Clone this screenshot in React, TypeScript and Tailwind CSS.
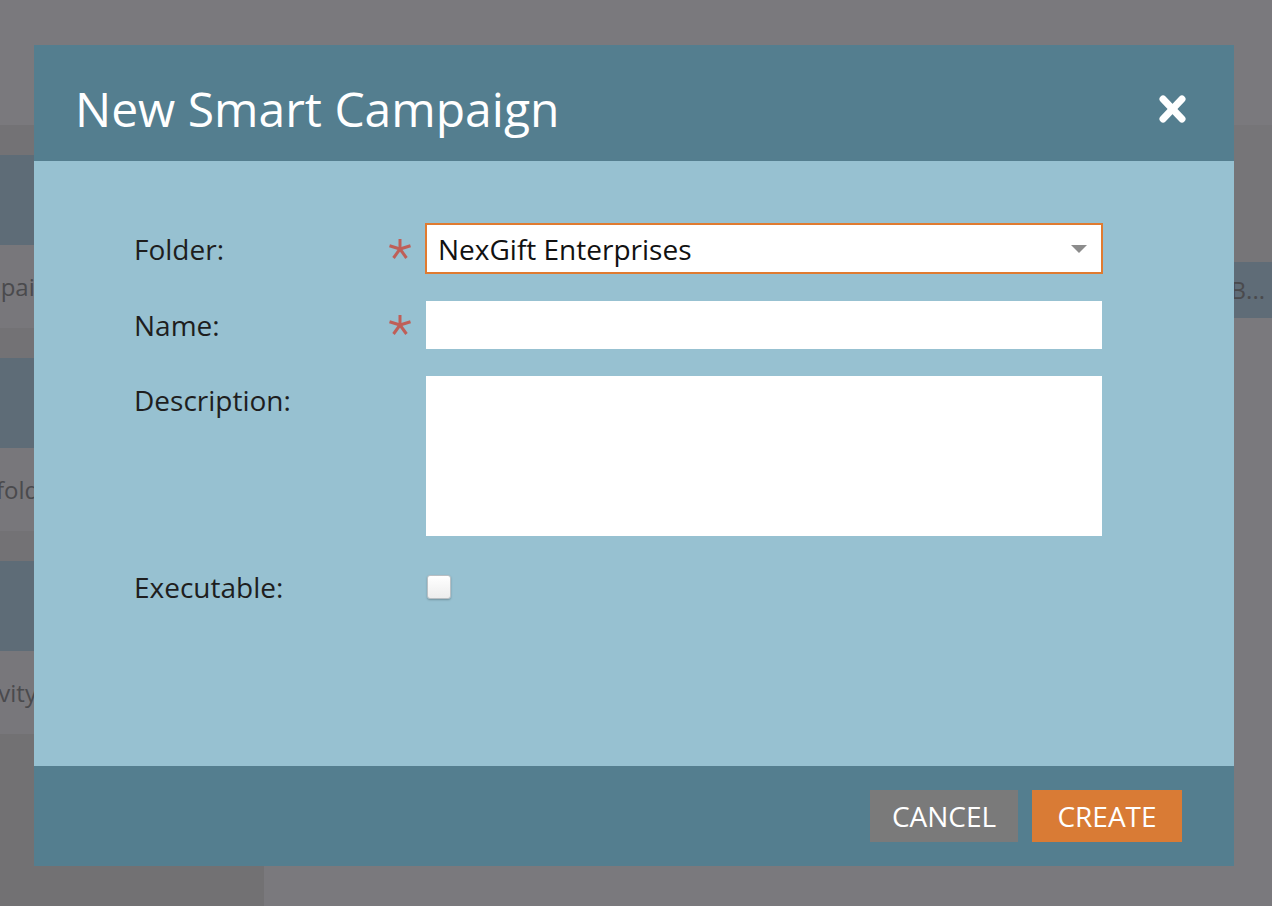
import React from 'react';

const font = { fontFamily: '"Open Sans", "Liberation Sans", sans-serif' };

const Asterisk: React.FC = () => (
  <svg width="24" height="22" viewBox="0 0 24 22" className="block">
    <g stroke="#bf5f58" strokeWidth="3" strokeLinecap="butt" transform="translate(12 11)">
      <line x1="0" y1="0" x2="0" y2="-10" />
      <line x1="0" y1="0" x2="10.5" y2="-3.3" />
      <line x1="0" y1="0" x2="6.5" y2="9" />
      <line x1="0" y1="0" x2="-6.5" y2="9" />
      <line x1="0" y1="0" x2="-10.5" y2="-3.3" />
    </g>
  </svg>
);

const SidebarGroup: React.FC<{ text: string; indent: string }> = ({ text, indent }) => (
  <div>
    <div className="h-[30px] bg-[#737275]" />
    <div className="h-[90px] bg-[#5e6c77]" />
    <div className="h-[83px] bg-[#78777b] flex items-center whitespace-nowrap text-[24px] text-[#4a4a4d] overflow-hidden">
      <span className={indent}>{text}</span>
    </div>
  </div>
);

const Row: React.FC<{ label: string; required?: boolean; top?: boolean; children: React.ReactNode }> = ({
  label,
  required,
  top,
  children,
}) => (
  <div className={`flex ${top ? 'items-start' : 'items-center'}`}>
    <div className="w-[291px] h-[48px] flex items-center justify-between pr-[13px] shrink-0">
      <span className="text-[28px] text-[#1e1e1e]">{label}</span>
      {required && <Asterisk />}
    </div>
    {children}
  </div>
);

export default function App() {
  return (
    <div className="relative w-[1272px] h-[906px] overflow-hidden bg-[#7b7a7e]" style={font}>
      {/* page behind the dialog */}
      <div className="flex flex-col h-full">
        <div className="h-[125px] bg-[#7a797d]" />
        <div className="flex flex-1">
          <div className="w-[264px] bg-[#727173] overflow-hidden">
            <SidebarGroup text="Campaigns" indent="-ml-[50px]" />
            <SidebarGroup text="folders" indent="-ml-[4px]" />
            <SidebarGroup text="Activity" indent="-ml-[43px]" />
          </div>
          <div className="flex-1 flex flex-col">
            <div className="h-[137px] bg-[#767578]" />
            <div className="h-[56px] bg-[#5f6c77] flex items-center justify-end pr-[7px] text-[24px] text-[#4a4a4d] overflow-hidden whitespace-nowrap">
              B...
            </div>
            <div className="flex-1 bg-[#7a797d]" />
          </div>
        </div>
      </div>

      {/* dialog */}
      <div className="absolute left-[34px] top-[45px] w-[1200px] flex flex-col">
        <div className="h-[116px] bg-[#547e8f] flex items-center justify-between pl-[41px] pr-[47px] pt-3">
          <h1 className="text-[48px] leading-none text-white font-normal">New Smart Campaign</h1>
          <svg width="29" height="30" viewBox="0 0 29 30">
            <g stroke="#ffffff" strokeWidth="7" strokeLinecap="round">
              <line x1="5" y1="5" x2="24" y2="25" />
              <line x1="24" y1="5" x2="5" y2="25" />
            </g>
          </svg>
        </div>

        <div className="h-[605px] bg-[#97c1d1] pl-[100px] pt-[62px] flex flex-col gap-[27px]">
          <Row label="Folder:" required>
            <div className="w-[678px] h-[51px] bg-white border-2 border-[#e07b30] flex items-center justify-between pl-[11px] pr-[14px]">
              <span className="text-[28px] text-[#111]">NexGift Enterprises</span>
              <svg width="16" height="8" viewBox="0 0 16 8">
                <path d="M0 0 H16 L8 8 Z" fill="#8c8c8c" />
              </svg>
            </div>
          </Row>
          <Row label="Name:" required>
            <div className="ml-px w-[676px] h-[48px] bg-white" />
          </Row>
          <Row label="Description:" top>
            <div className="ml-px w-[676px] h-[160px] bg-white" />
          </Row>
          <Row label="Executable:">
            <div className="ml-[2px] w-[24px] h-[24px] rounded-[3px] bg-gradient-to-b from-white to-[#ededed] border border-[#b9bfc3] shadow-[0_1px_2px_rgba(0,0,0,0.25)]" />
          </Row>
        </div>

        <div className="h-[100px] bg-[#547e8f] flex items-center justify-end gap-[14px] pr-[52px]">
          <button className="w-[148px] h-[52px] bg-[#7a7a7a] text-white text-[28px] uppercase">Cancel</button>
          <button className="w-[150px] h-[52px] bg-[#d97b35] text-white text-[28px] uppercase">Create</button>
        </div>
      </div>
    </div>
  );
}
